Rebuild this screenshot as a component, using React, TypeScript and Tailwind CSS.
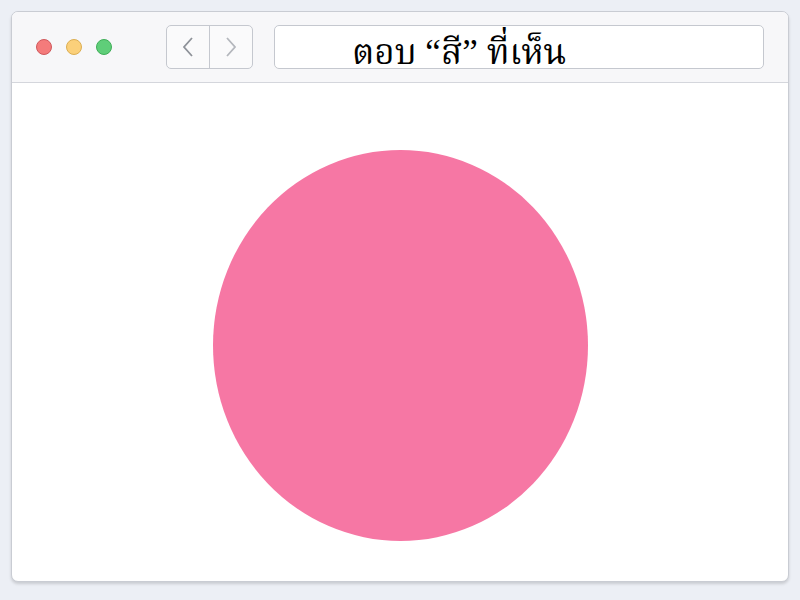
export default function App() {
  return (
    <div className="w-[800px] h-[600px] bg-[#eceff5] p-[11px] pb-[18px]">
      <div className="h-full bg-white rounded-[7px] border border-[#c9ccd3] shadow-[0_2px_3px_rgba(0,0,0,0.15)] flex flex-col overflow-hidden">
        <div className="h-[71px] shrink-0 bg-[#f7f7f9] border-b border-[#d4d6dc] flex items-center pl-[24px] pr-[24px]">
          <div className="flex gap-[14px]">
            <span className="w-[16px] h-[16px] rounded-full bg-[#f47b7b] border border-[#d0585c]" />
            <span className="w-[16px] h-[16px] rounded-full bg-[#fbd07a] border border-[#dcae52]" />
            <span className="w-[16px] h-[16px] rounded-full bg-[#5fce79] border border-[#3fae58]" />
          </div>
          <div className="ml-[54px] flex h-[44px] w-[87px] rounded-[5px] border border-[#c5c8cf] bg-[#fafafb]">
            <div className="w-1/2 border-r border-[#c5c8cf] flex items-center justify-center">
              <svg width="14" height="22" viewBox="0 0 14 22" fill="none" stroke="#8e9299" strokeWidth="1.8"><path d="M11 2 L3 11 L11 20" /></svg>
            </div>
            <div className="w-1/2 flex items-center justify-center">
              <svg width="14" height="22" viewBox="0 0 14 22" fill="none" stroke="#b4b7bd" strokeWidth="1.8"><path d="M3 2 L11 11 L3 20" /></svg>
            </div>
          </div>
          <div className="ml-[21px] h-[44px] w-[490px] rounded-[5px] border border-[#c5c8cf] bg-white relative overflow-visible">
            <span className="absolute left-[77px] top-[5px] text-[35px] leading-[44px] text-black whitespace-nowrap font-['Liberation_Serif','Noto_Serif_Thai','Noto_Sans_Thai_Looped','Norasi','Loma','Garuda',serif]">ตอบ “สี” ที่เห็น</span>
          </div>
        </div>
        <div className="flex-1 flex items-start justify-center pt-[67px]">
          <div className="w-[375px] h-[391px] rounded-[50%] bg-[#f677a4]" />
        </div>
      </div>
    </div>
  );
}
